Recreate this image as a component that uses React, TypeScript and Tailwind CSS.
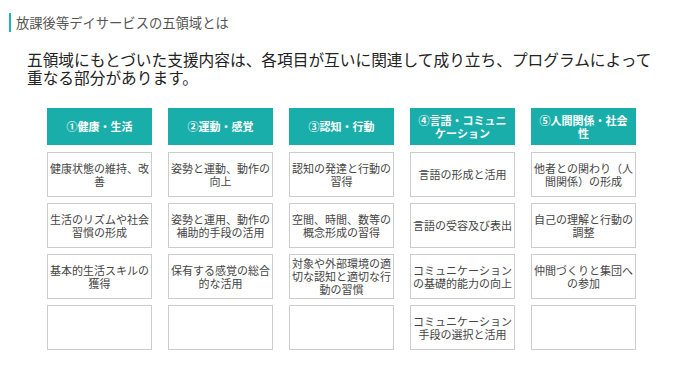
import React from 'react';

type Column = {
    title: string[];
    items: string[][];
};

const columns: Column[] = [
    {
        title: ['①健康・生活'],
        items: [['健康状態の維持、改', '善'], ['生活のリズムや社会', '習慣の形成'], ['基本的生活スキルの', '獲得'], []],
    },
    {
        title: ['②運動・感覚'],
        items: [['姿勢と運動、動作の', '向上'], ['姿勢と運用、動作の', '補助的手段の活用'], ['保有する感覚の総合', '的な活用'], []],
    },
    {
        title: ['③認知・行動'],
        items: [
            ['認知の発達と行動の', '習得'],
            ['空間、時間、数等の', '概念形成の習得'],
            ['対象や外部環境の適', '切な認知と適切な行', '動の習慣'],
            [],
        ],
    },
    {
        title: ['④言語・コミュニ', 'ケーション'],
        items: [
            ['言語の形成と活用'],
            ['言語の受容及び表出'],
            ['コミュニケーション', 'の基礎的能力の向上'],
            ['コミュニケーション', '手段の選択と活用'],
        ],
    },
    {
        title: ['⑤人間関係・社会', '性'],
        items: [['他者との関わり（人', '間関係）の形成'], ['自己の理解と行動の', '調整'], ['仲間づくりと集団へ', 'の参加'], []],
    },
];

export default function App() {
    return (
        <div
            className="w-[682px] h-[384px] bg-white overflow-hidden"
            style={{ fontFamily: '"Noto Sans CJK JP", "Noto Sans", sans-serif' }}
        >
            {/* タイトル */}
            <div className="flex items-center pt-[13px] pl-[9px]">
                <div className="w-[2px] h-[19px] bg-[#1fb3ae]" />
                <h1 className="ml-[5px] text-[13.3px] leading-[19px] text-[#555555]">放課後等デイサービスの五領域とは</h1>
            </div>

            {/* 説明文 */}
            <p className="mt-[19px] ml-[27px] w-[640px] text-[15.7px] leading-[18px] text-[#222222]">
                五領域にもとづいた支援内容は、各項目が互いに関連して成り立ち、プログラムによって
                <br />
                重なる部分があります。
            </p>

            {/* 五領域の表 */}
            <div className="mt-[21px] ml-[47px] flex gap-[16px]">
                {columns.map((col, i) => (
                    <div key={i} className="w-[105px] flex flex-col">
                        <div className="h-[37px] bg-[#1aaeaa] flex flex-col items-center justify-center text-white font-bold text-[11px] leading-[13px]">
                            {col.title.map((t, j) => (
                                <span key={j}>{t}</span>
                            ))}
                        </div>
                        <div className="mt-[7px] flex flex-col gap-[6px]">
                            {col.items.map((lines, j) => (
                                <div
                                    key={j}
                                    className="h-[45px] border border-[#cccccc] flex flex-col items-center justify-center text-[11px] leading-[13px] text-[#444444] whitespace-nowrap"
                                >
                                    {lines.map((l, k) => (
                                        <span key={k}>{l}</span>
                                    ))}
                                </div>
                            ))}
                        </div>
                    </div>
                ))}
            </div>
        </div>
    );
}
